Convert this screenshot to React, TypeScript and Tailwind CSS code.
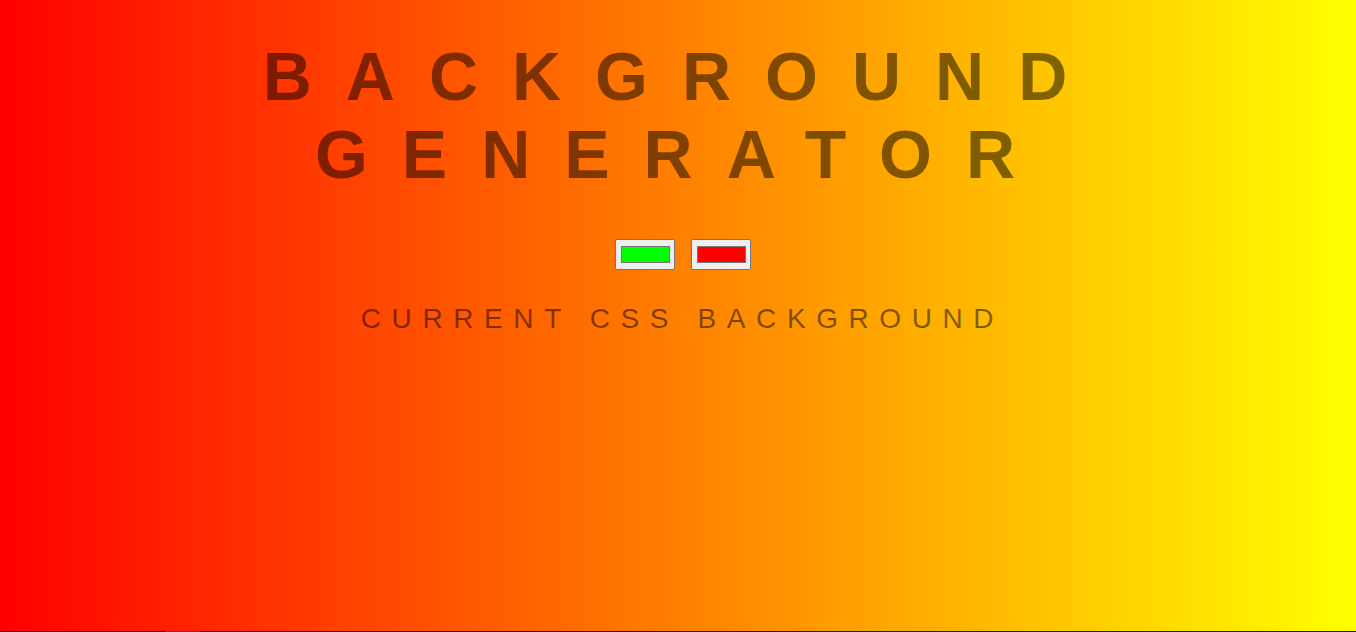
export default function App() {
  return (
    <div className="flex h-[632px] flex-col font-['Liberation_Sans',Arial,sans-serif]">
      <main className="flex flex-1 flex-col items-center bg-[linear-gradient(to_right,red,yellow)] pt-[37px] text-center uppercase text-black/50">
        <h1 className="w-full pl-[8px] text-[68px] leading-[78px] font-bold tracking-[34px]">
          Background Generator
        </h1>
        <div className="mt-[46px] ml-[10px] flex gap-4">
          <ColorSwatch color="#00ff00" />
          <ColorSwatch color="#ff0000" />
        </div>
        <h3 className="mt-[33px] pl-[9px] text-[28px] leading-[31px] font-normal tracking-[10.6px]">
          Current CSS Background
        </h3>
      </main>
      <div className="flex h-px bg-[#1c1c1c]">
        <div className="ml-[165px] w-[35px] bg-[#4a4a4a]" />
      </div>
    </div>
  );
}

function ColorSwatch({ color }: { color: string }) {
  return (
    <button
      type="button"
      className="flex h-[31px] w-[60px] items-center justify-center rounded-[2px] border border-[#767676] bg-[#efefef]"
    >
      <span
        className="block h-[17px] w-[49px] border border-[#777]"
        style={{ backgroundColor: color }}
      />
    </button>
  );
}
